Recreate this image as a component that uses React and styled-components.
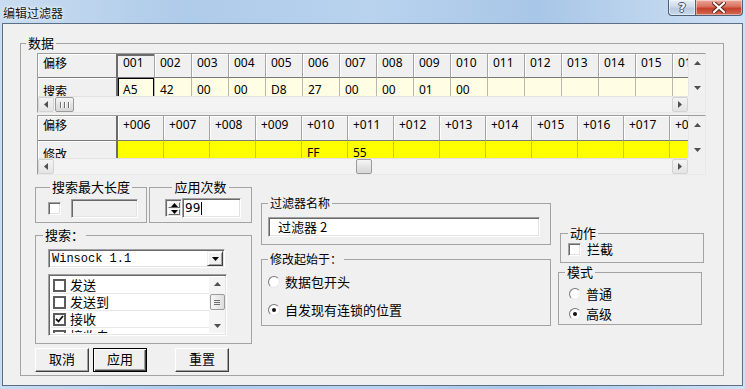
import React from "react";
import styled, { createGlobalStyle } from "styled-components";

const cjk = `"Noto Sans CJK SC", "Noto Sans", sans-serif`;
const ui = `"Noto Sans", "Noto Sans CJK SC", sans-serif`;

const GlobalStyle = createGlobalStyle`
  html, body { margin: 0; padding: 0; overflow: hidden; background: #fff; }
  body { font-family: ${cjk}; font-size: 12px; color: #000; }
  * { box-sizing: border-box; }
`;

const Window = styled.div`
  width: 745px;
  height: 389px;
  display: flex;
  flex-direction: column;
  background: linear-gradient(90deg, #c9dcf1 0%, #aecbe9 25%, #b9d3ee 50%, #a8c6e7 72%, #cfe1f4 100%);
`;

const TitleBar = styled.div`
  height: 23px;
  flex: none;
  display: flex;
  justify-content: space-between;
  align-items: flex-start;
  padding-left: 3px;
`;

const TitleText = styled.div`
  font: 12px/16px ${cjk};
  margin-top: 5px;
  color: #141414;
  text-shadow: 0 0 5px #fff, 0 0 2px #fff;
`;

const Caption = styled.div`
  display: flex;
  margin-right: 2px;
`;

const CapBtn = styled.div`
  width: ${p => p.$w}px;
  height: 16px;
  border: 1px solid #4c607a;
  border-top: none;
  display: flex;
  align-items: center;
  justify-content: center;
  background: ${p => p.$close
    ? "linear-gradient(180deg, #e9a99c 0%, #d8705c 45%, #c5412b 55%, #d3694f 100%)"
    : "linear-gradient(180deg, #e6edf6 0%, #cfdbea 45%, #b9cbe0 55%, #c9d8ea 100%)"};
  border-radius: ${p => p.$close ? "0 0 4px 0" : "0 0 0 4px"};
  border-left: ${p => p.$close ? "none" : "1px solid #4c607a"};
  box-shadow: inset 0 0 0 1px rgba(255, 255, 255, 0.45);
`;

const HelpMark = styled.span`
  color: #f4f7fb;
  font: bold 13px/1 "DejaVu Sans", sans-serif;
  text-shadow: -1px 0 #44546a, 1px 0 #44546a, 0 -1px #44546a, 0 1px #44546a;
`;

const Client = styled.div`
  flex: 1;
  margin: 0 2px 3px 2px;
  background: #f0f0f0;
  border: 1px solid #5d6f87;
  padding: 12px 0 0 17px;
`;

const GroupBox = styled.fieldset`
  margin: ${p => p.$mt || 0}px 0 0 ${p => p.$ml || 0}px;
  padding: 0;
  min-width: 0;
  flex: none;
  width: ${p => p.$w}px;
  height: ${p => p.$h}px;
  border: 1px solid #a3a3a3;
`;

const Legend = styled.legend`
  padding: 0 2px;
  font: ${p => p.$size || 13}px/14px ${cjk};
  margin-left: ${p => (p.$center ? "auto" : `${p.$ml ?? 6}px`)};
  margin-right: ${p => (p.$center ? "auto" : "0")};
  white-space: pre;
`;

const DataBody = styled.div`
  padding: 3px 0 0 14px;
`;

/* grid */
const GridBox = styled.div`
  width: 669px;
  margin: ${p => p.$mt || 0}px 0 0 2px;
  border: 1px solid;
  border-color: #9c9c9c #e8e8e8 #e8e8e8 #9c9c9c;
  display: grid;
  grid-template-columns: 1fr 17px;
  grid-template-rows: 42px 16px;
  background: #f0f0f0;
`;

const Cells = styled.div`
  overflow: hidden;
  min-width: 0;
`;

const Row = styled.div`
  display: flex;
  height: ${p => p.$h}px;
`;

const RowHead = styled.div`
  flex: none;
  width: 80px;
  height: 100%;
  padding: ${p => (p.$head ? 1 : 5)}px 0 0 5px;
  font: 12px/16px ${cjk};
  background: #f0f0f0;
  border-right: 2px solid #6c6c6c;
  border-bottom: 1px solid ${p => (p.$head ? "#7a7a7a" : "#c4c4c4")};
  box-shadow: inset 1px 1px 0 #fff;
`;

const HeadCell = styled.div`
  flex: none;
  width: ${p => p.$w}px;
  height: 100%;
  padding: 1px 0 0 5px;
  font: 12px/16px ${ui};
  white-space: nowrap;
  overflow: hidden;
  background: #f0f0f0;
  border-right: 1px solid #a5a5a5;
  border-bottom: 1px solid #7a7a7a;
  box-shadow: ${p => (p.$sel ? "inset 0 2px 0 #6c6c6c" : "inset 1px 1px 0 #fff")};
`;

const DataCell = styled.div`
  flex: none;
  width: ${p => p.$w}px;
  height: 100%;
  padding: 4px 0 0 5px;
  font: 12px/16px ${ui};
  white-space: nowrap;
  background: ${p => p.$bg};
  border-right: 1px solid #b8b8b0;
  box-shadow: ${p => (p.$sel ? "inset 0 0 0 1px #000" : "none")};
`;

const VScroll = styled.div`
  display: flex;
  flex-direction: column;
  justify-content: space-between;
  background: #f0f0f0;
  border-left: 1px solid #e6e6e6;
`;

const ArrowBox = styled.div`
  flex: none;
  width: ${p => p.$w || 16}px;
  height: ${p => p.$h || 16}px;
  display: flex;
  align-items: center;
  justify-content: center;
  border: 1px solid ${p => (p.$framed ? "#d3d3d3" : "transparent")};
  border-radius: 2px;
  background: ${p => (p.$framed ? "linear-gradient(180deg, #f4f4f4, #e4e4e4)" : "transparent")};
`;

const HScroll = styled.div`
  display: flex;
  align-items: stretch;
  background: #f3f3f3;
  border-top: 1px solid #e2e2e2;
`;

const Track = styled.div`
  flex: 1;
  display: flex;
  align-items: stretch;
`;

const Thumb = styled.div`
  flex: none;
  width: ${p => p.$w}px;
  margin-left: ${p => p.$at}px;
  border: 1px solid #9b9b9b;
  border-radius: 2px;
  background: linear-gradient(180deg, #f6f6f6 0%, #e4e4e4 50%, #d7d7d7 100%);
  display: flex;
  align-items: center;
  justify-content: center;
  gap: 1px;
`;

const Grip = styled.span`
  width: 1px;
  height: 6px;
  background: #6f6f6f;
  box-shadow: 1px 0 0 #fff;
  margin: 0 1px;
`;

const Corner = styled.div`
  background: #f0f0f0;
`;

const Tri = ({ dir = "down", color = "#505050" }) => {
  const horiz = dir === "left" || dir === "right";
  const pts = {
    up: "0,4 3.5,0 7,4",
    down: "0,0 7,0 3.5,4",
    left: "4,0 4,7 0,3.5",
    right: "0,0 0,7 4,3.5",
  }[dir];
  return (
    <svg width={horiz ? 4 : 7} height={horiz ? 7 : 4} viewBox={horiz ? "0 0 4 7" : "0 0 7 4"}>
      <polygon points={pts} fill={color} />
    </svg>
  );
};

const DataGrid = ({ mt, corner, label, cols, colW, values, bg, headH, thumbAt, thumbW, grip, selCol = -1 }) => (
  <GridBox $mt={mt}>
    <Cells>
      <Row $h={headH}>
        <RowHead $head>{corner}</RowHead>
        {cols.map((c, i) => (
          <HeadCell key={c} $w={colW} $sel={i === selCol}>{c}</HeadCell>
        ))}
      </Row>
      <Row $h={25}>
        <RowHead>{label}</RowHead>
        {cols.map((c, i) => (
          <DataCell key={c} $w={colW} $bg={bg} $sel={i === selCol}>{values[i] || ""}</DataCell>
        ))}
      </Row>
    </Cells>
    <VScroll>
      <ArrowBox $w={16} $h={17}><Tri dir="up" /></ArrowBox>
      <ArrowBox $w={16} $h={17}><Tri dir="down" /></ArrowBox>
    </VScroll>
    <HScroll>
      <ArrowBox $framed $w={16} $h={15}><Tri dir="left" /></ArrowBox>
      <Track>
        <Thumb $at={thumbAt} $w={thumbW}>
          {grip && (<><Grip /><Grip /><Grip /></>)}
        </Thumb>
      </Track>
      <ArrowBox $framed $w={16} $h={15}><Tri dir="right" /></ArrowBox>
    </HScroll>
    <Corner />
  </GridBox>
);

/* lower part */
const Lower = styled.div`
  display: flex;
  align-items: flex-start;
`;

const Col = styled.div`
  flex: none;
  display: flex;
  flex-direction: column;
  align-items: flex-start;
  width: ${p => p.$w}px;
  margin: ${p => p.$mt || 0}px 0 0 ${p => p.$ml || 0}px;
`;

const HRow = styled.div`
  display: flex;
  align-items: flex-start;
  gap: ${p => p.$gap || 0}px;
  margin-top: ${p => p.$mt || 0}px;
`;

const BoxBody = styled.div`
  display: flex;
  flex-direction: ${p => (p.$column ? "column" : "row")};
  align-items: ${p => (p.$column ? "flex-start" : "center")};
  gap: ${p => p.$gap || 0}px;
  padding: ${p => p.$pt || 0}px 0 0 ${p => p.$pl || 0}px;
`;

const sunken = `
  border: 1px solid;
  border-color: #a0a0a0 #fff #fff #a0a0a0;
  box-shadow: inset 1px 1px 0 #696969, inset -1px -1px 0 #e3e3e3;
`;

const CheckBox = styled.span`
  flex: none;
  width: 13px;
  height: 13px;
  background: #fff;
  ${sunken}
`;

const TextBox = styled.div`
  flex: none;
  width: ${p => p.$w}px;
  height: ${p => p.$h || 20}px;
  background: ${p => (p.$disabled ? "#f0f0f0" : "#fff")};
  ${sunken}
  padding: 0 0 0 ${p => p.$pl || 3}px;
  display: flex;
  align-items: center;
  font: ${p => p.$font || `13px/16px ${cjk}`};
  white-space: pre;
`;

const Caret = styled.span`
  width: 1px;
  height: 13px;
  background: #000;
  margin-left: 1px;
`;

const Spinner = styled.div`
  flex: none;
  width: 17px;
  height: 18px;
  ${sunken}
  padding: 2px 1px 2px 2px;
  display: flex;
  flex-direction: column;
  gap: 1px;
`;

const SpinHalf = styled.div`
  flex: 1;
  background: #f0f0f0;
  border: 1px solid;
  border-color: #fff #6a6a6a #6a6a6a #fff;
  display: flex;
  align-items: center;
  justify-content: center;
`;

const Combo = styled.div`
  width: 177px;
  height: 19px;
  background: #fff;
  ${sunken}
  display: flex;
  align-items: center;
  justify-content: space-between;
  padding: 0 1px 0 3px;
  font: 12px/16px "Liberation Mono", monospace;
`;

const DropBtn = styled.div`
  width: 16px;
  height: 15px;
  background: #f0f0f0;
  border: 1px solid;
  border-color: #f0f0f0 #404040 #404040 #f0f0f0;
  box-shadow: inset 1px 1px 0 #fff, inset -1px -1px 0 #a0a0a0;
  display: flex;
  align-items: center;
  justify-content: center;
`;

const ListBox = styled.div`
  width: 179px;
  height: 62px;
  margin-top: 6px;
  background: #fff;
  ${sunken}
  padding: 2px 1px 2px 2px;
  display: flex;
  overflow: hidden;
`;

const ListItems = styled.div`
  flex: 1;
  overflow: hidden;
`;

const ListItem = styled.div`
  height: 17px;
  display: flex;
  align-items: center;
  gap: 4px;
  padding-left: 2px;
  border-bottom: 1px solid #e8e8e8;
  font: 13px/14px ${cjk};
  overflow: hidden;
`;

const ListCheck = styled.span`
  flex: none;
  width: 13px;
  height: 13px;
  border: 2px solid #5c5c5c;
  background: #fff;
  display: flex;
  align-items: center;
  justify-content: center;
`;

const ListScroll = styled.div`
  flex: none;
  width: 16px;
  background: #f4f4f4;
  display: flex;
  flex-direction: column;
  align-items: center;
  justify-content: space-between;
`;

const SmallThumb = styled.div`
  width: 15px;
  height: 16px;
  margin-top: -6px;
  border: 1px solid #9b9b9b;
  border-radius: 2px;
  background: linear-gradient(90deg, #f6f6f6, #dedede);
  display: flex;
  flex-direction: column;
  align-items: center;
  justify-content: center;
  gap: 1px;
`;

const GripH = styled.span`
  width: 6px;
  height: 1px;
  background: #6f6f6f;
`;

const Button = styled.div`
  flex: none;
  width: 54px;
  height: 24px;
  margin-left: ${p => p.$ml || 0}px;
  background: #f0f0f0;
  border: 1px solid;
  border-color: ${p => (p.$default ? "#000" : "#fff #404040 #404040 #fff")};
  box-shadow: ${p => (p.$default
    ? "inset 1px 1px 0 #fff, inset -1px -1px 0 #404040, inset -2px -2px 0 #a0a0a0"
    : "inset -1px -1px 0 #a0a0a0")};
  display: flex;
  align-items: center;
  justify-content: center;
  font: 13px/16px ${cjk};
  padding-bottom: 2px;
`;

const Choice = styled.div`
  display: flex;
  align-items: center;
  gap: ${p => p.$gap || 5}px;
  font: 13px/16px ${cjk};
  height: 14px;
`;

const Radio = styled.span`
  flex: none;
  width: 12px;
  height: 12px;
  border-radius: 50%;
  border: 1px solid;
  border-color: #7a7a7a #eaeaea #eaeaea #7a7a7a;
  background: radial-gradient(circle at 50% 50%, #fff 0 55%, #e9e9e9 100%);
  display: flex;
  align-items: center;
  justify-content: center;
  &::after {
    content: "";
    width: 4px;
    height: 4px;
    border-radius: 50%;
    background: ${p => (p.$on ? "#111" : "transparent")};
  }
`;

const Tick = () => (
  <svg width="9" height="8" viewBox="0 0 9 8">
    <polyline points="1,4 3.5,6.5 8,1" fill="none" stroke="#111" strokeWidth="1.8" />
  </svg>
);

const CloseGlyph = () => (
  <svg width="14" height="11" viewBox="0 0 14 11">
    <path d="M2 1 L12 10 M12 1 L2 10" stroke="#5a1e14" strokeWidth="4" strokeLinecap="square" />
    <path d="M2 1 L12 10 M12 1 L2 10" stroke="#fff" strokeWidth="2.2" strokeLinecap="square" />
  </svg>
);

const topCols = ["001", "002", "003", "004", "005", "006", "007", "008", "009", "010", "011", "012", "013", "014", "015", "016", "017"];
const topVals = ["A5", "42", "00", "00", "D8", "27", "00", "00", "01", "00"];
const botCols = ["+006", "+007", "+008", "+009", "+010", "+011", "+012", "+013", "+014", "+015", "+016", "+017", "+018", "+019"];
const botVals = ["", "", "", "", "FF", "55"];
const listItems = [
  { t: "发送", on: false },
  { t: "发送到", on: false },
  { t: "接收", on: true },
  { t: "接收自", on: false },
];

export default function App() {
  return (
    <>
      <GlobalStyle />
      <Window>
        <TitleBar>
          <TitleText>编辑过滤器</TitleText>
          <Caption>
            <CapBtn $w={28}><HelpMark>?</HelpMark></CapBtn>
            <CapBtn $w={47} $close><CloseGlyph /></CapBtn>
          </Caption>
        </TitleBar>
        <Client>
          <GroupBox $w={704} $h={340}>
            <Legend $ml={5}>数据</Legend>
            <DataBody>
              <DataGrid
                corner="偏移" label="搜索" cols={topCols} colW={37} values={topVals}
                bg="#fffde3" headH={24} thumbAt={1} thumbW={19} grip selCol={0}
              />
              <DataGrid
                mt={2} corner="偏移" label="修改" cols={botCols} colW={46} values={botVals}
                bg="#ffff00" headH={25} thumbAt={302} thumbW={16}
              />
              <Lower>
                <Col $w={217} $mt={5}>
                  <HRow $gap={2}>
                    <GroupBox $w={112} $h={43}>
                      <Legend $center>搜索最大长度</Legend>
                      <BoxBody $pt={5} $pl={12} $gap={10}>
                        <CheckBox />
                        <TextBox $w={67} $h={19} $disabled />
                      </BoxBody>
                    </GroupBox>
                    <GroupBox $w={103} $h={43}>
                      <Legend $center>应用次数</Legend>
                      <BoxBody $pt={4} $pl={15}>
                        <Spinner>
                          <SpinHalf><Tri dir="up" color="#000" /></SpinHalf>
                          <SpinHalf><Tri dir="down" color="#000" /></SpinHalf>
                        </Spinner>
                        <TextBox $w={59} $h={20} $pl={2} $font={`12px/16px "DejaVu Sans", sans-serif`}>
                          99<Caret />
                        </TextBox>
                      </BoxBody>
                    </GroupBox>
                  </HRow>
                  <GroupBox $w={217} $h={116} $mt={5}>
                    <Legend $ml={7}>搜索：</Legend>
                    <BoxBody $column $pt={7} $pl={12}>
                      <Combo>
                        <span>Winsock 1.1</span>
                        <DropBtn><Tri dir="down" color="#000" /></DropBtn>
                      </Combo>
                      <ListBox>
                        <ListItems>
                          {listItems.map(it => (
                            <ListItem key={it.t}>
                              <ListCheck>{it.on && <Tick />}</ListCheck>
                              {it.t}
                            </ListItem>
                          ))}
                        </ListItems>
                        <ListScroll>
                          <ArrowBox $w={16} $h={14}><Tri dir="up" /></ArrowBox>
                          <SmallThumb><GripH /><GripH /><GripH /></SmallThumb>
                          <ArrowBox $w={16} $h={14}><Tri dir="down" /></ArrowBox>
                        </ListScroll>
                      </ListBox>
                    </BoxBody>
                  </GroupBox>
                  <HRow $mt={4}>
                    <Button>取消</Button>
                    <Button $ml={4} $default>应用</Button>
                    <Button $ml={28}>重置</Button>
                  </HRow>
                </Col>
                <Col $w={290} $ml={9} $mt={21}>
                  <GroupBox $w={290} $h={49}>
                    <Legend $size={12} $ml={6}>过滤器名称</Legend>
                    <BoxBody $pt={7} $pl={6}>
                      <TextBox $w={272} $h={20} $pl={9}>过滤器 2</TextBox>
                    </BoxBody>
                  </GroupBox>
                  <GroupBox $w={290} $h={74} $mt={7}>
                    <Legend $size={12} $ml={6}>修改起始于：</Legend>
                    <BoxBody $column $pt={9} $pl={6} $gap={14}>
                      <Choice><Radio />数据包开头</Choice>
                      <Choice><Radio $on />自发现有连锁的位置</Choice>
                    </BoxBody>
                  </GroupBox>
                </Col>
                <Col $w={146} $ml={7} $mt={51}>
                  <GroupBox $w={144} $h={37} $ml={2}>
                    <Legend $ml={7}>动作</Legend>
                    <BoxBody $pt={2} $pl={7}>
                      <Choice $gap={6}><CheckBox />拦截</Choice>
                    </BoxBody>
                  </GroupBox>
                  <GroupBox $w={144} $h={60} $mt={2}>
                    <Legend $ml={6}>模式</Legend>
                    <BoxBody $column $pt={8} $pl={10} $gap={6}>
                      <Choice><Radio />普通</Choice>
                      <Choice><Radio $on />高级</Choice>
                    </BoxBody>
                  </GroupBox>
                </Col>
              </Lower>
            </DataBody>
          </GroupBox>
        </Client>
      </Window>
    </>
  );
}
